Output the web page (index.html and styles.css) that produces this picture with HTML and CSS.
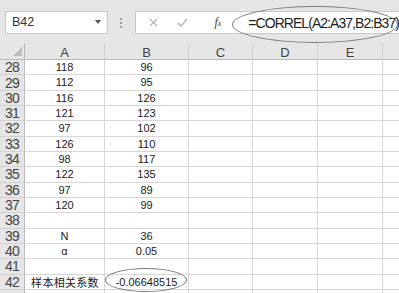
FILE: index.html
```html
<!DOCTYPE html>
<html lang="zh">
<head>
    <meta charset="UTF-8">
    <title>CORREL</title>
    <link rel="stylesheet" href="styles.css">
</head>
<body>
    <div class="toolbar">
        <div class="namebox">
            <span>B42</span>
            <svg width="6" height="4" viewBox="0 0 6 4"><polygon points="0,0 6,0 3,4" fill="#555"/></svg>
        </div>
        <div class="dots"><i></i><i></i><i></i></div>
        <div class="fbar">
            <svg class="btn-x" width="9" height="9" viewBox="0 0 9 9"><path d="M1 1 L8 8 M8 1 L1 8" stroke="#b8b8b8" stroke-width="1.3"/></svg>
            <svg class="btn-ok" width="11" height="9" viewBox="0 0 11 9"><path d="M1 5 L4 8 L10 1" stroke="#b8b8b8" stroke-width="1.5" fill="none"/></svg>
            <span class="fx">f<small>x</small></span>
            <span class="formula">=CORREL(A2:A37,B2:B37)</span>
        </div>
        <div class="ring ring-formula"></div>
    </div>

    <div class="sheet" id="sheet">
        <div class="corner"><svg width="9" height="9" viewBox="0 0 9 9"><polygon points="9,0 9,9 0,9" fill="#bdbdbd"/></svg></div>
        <div class="colhead">A</div>
        <div class="colhead">B</div>
        <div class="colhead">C</div>
        <div class="colhead">D</div>
        <div class="colhead">E</div>
        <div class="colhead last"></div>
    </div>

    <script>
        var rows = [
            [28, '118', '96'], [29, '112', '95'], [30, '116', '126'], [31, '121', '123'],
            [32, '97', '102'], [33, '126', '110'], [34, '98', '117'], [35, '122', '135'],
            [36, '97', '89'], [37, '120', '99'], [38, '', ''], [39, 'N', '36'],
            [40, 'α', '0.05'], [41, '', ''], [42, '样本相关系数', '-0.06648515'], ['', '', '']
        ];
        var sheet = document.getElementById("sheet");

        rows.forEach(function(r) {
            var head = document.createElement("div");
            head.className = "rowhead";
            head.innerText = r[0];
            sheet.appendChild(head);
            for (var i = 0; i < 6; i++) {
                var cell = document.createElement("div");
                cell.className = "cell" + (i == 5 ? " last" : "");
                if (i < 2) cell.innerText = r[i + 1];
                if (r[0] == 42 && i == 0) cell.className += " cjk";
                if (r[0] == 42 && i == 1) {
                    var ring = document.createElement("div");
                    ring.className = "ring ring-cell";
                    cell.appendChild(ring);
                }
                sheet.appendChild(cell);
            }
        });
    </script>
</body>
</html>
```

FILE: styles.css
```css
* {
    box-sizing: border-box;
}
body {
    margin: 0;
    width: 399px;
    height: 293px;
    overflow: hidden;
    background: #fff;
    font-family: "Liberation Sans", Arial, sans-serif;
}
.toolbar {
    position: relative;
    height: 43px;
    background-color: #e6e6e6;
    display: flex;
    align-items: flex-start;
    padding: 11px 0 0 5px;
}
.namebox {
    width: 103px;
    height: 23px;
    background: #fff;
    border: 1px solid #c9c9c9;
    display: flex;
    align-items: center;
    justify-content: space-between;
    padding: 0 6px 1px 6px;
    font-size: 12.5px;
    color: #333;
}
.dots {
    width: 28px;
    height: 23px;
    display: flex;
    flex-direction: column;
    align-items: center;
    justify-content: center;
    gap: 2px;
}
.dots i {
    width: 2px;
    height: 2px;
    background: #a0a0a0;
}
.fbar {
    flex: 1;
    height: 23px;
    background: #fff;
    border: 1px solid #c9c9c9;
    border-right: none;
    display: flex;
    align-items: center;
    padding-left: 13px;
}
.btn-ok {
    margin-left: 19px;
}
.fx {
    margin-left: 26px;
    font-family: "Liberation Serif", serif;
    font-style: italic;
    font-size: 12px;
    color: #444;
}
.fx small {
    font-size: 8px;
}
.formula {
    margin-left: 27px;
    font-size: 14px;
    letter-spacing: -0.95px;
    color: #222;
    white-space: nowrap;
}
.ring {
    position: absolute;
    border: 1.5px solid #7a7a7a;
    border-radius: 50%;
}
.ring-formula {
    left: 232px;
    top: 6px;
    width: 166px;
    height: 37px;
}
.sheet {
    display: grid;
    grid-template-columns: 25px 80px 84px 64px 65px 65px 1fr;
    grid-template-rows: 17px repeat(15, 15.33px) 20px;
    background: #fff;
}
.corner, .colhead, .rowhead {
    background-color: #e6e6e6;
    color: #444;
}
.corner {
    border-right: 1px solid #b8b8b8;
    border-bottom: 1px solid #b8b8b8;
    display: flex;
    align-items: flex-end;
    justify-content: flex-end;
    padding: 0 2px 3px 0;
}
.colhead {
    border-right: 1px solid #cfcfcf;
    border-bottom: 1px solid #b8b8b8;
    display: flex;
    justify-content: center;
    align-items: center;
    font-size: 13px;
    padding-top: 2px;
}
.rowhead {
    border-right: 1px solid #b8b8b8;
    border-bottom: 1px solid #d2d2d2;
    display: flex;
    justify-content: center;
    align-items: center;
    font-size: 14px;
    letter-spacing: -0.8px;
}
.cell {
    position: relative;
    border-right: 1px solid #d6d6d6;
    border-bottom: 1px solid #d6d6d6;
    display: flex;
    justify-content: center;
    align-items: center;
    font-size: 11px;
    color: #222;
    white-space: nowrap;
}
.last {
    border-right: none;
}
.cjk {
    font-family: "Noto Sans CJK SC", sans-serif;
    font-size: 11px;
    letter-spacing: 0.3px;
    padding-left: 1px;
}
.ring-cell {
    left: 0;
    top: -7px;
    width: 82px;
    height: 24px;
}
```
